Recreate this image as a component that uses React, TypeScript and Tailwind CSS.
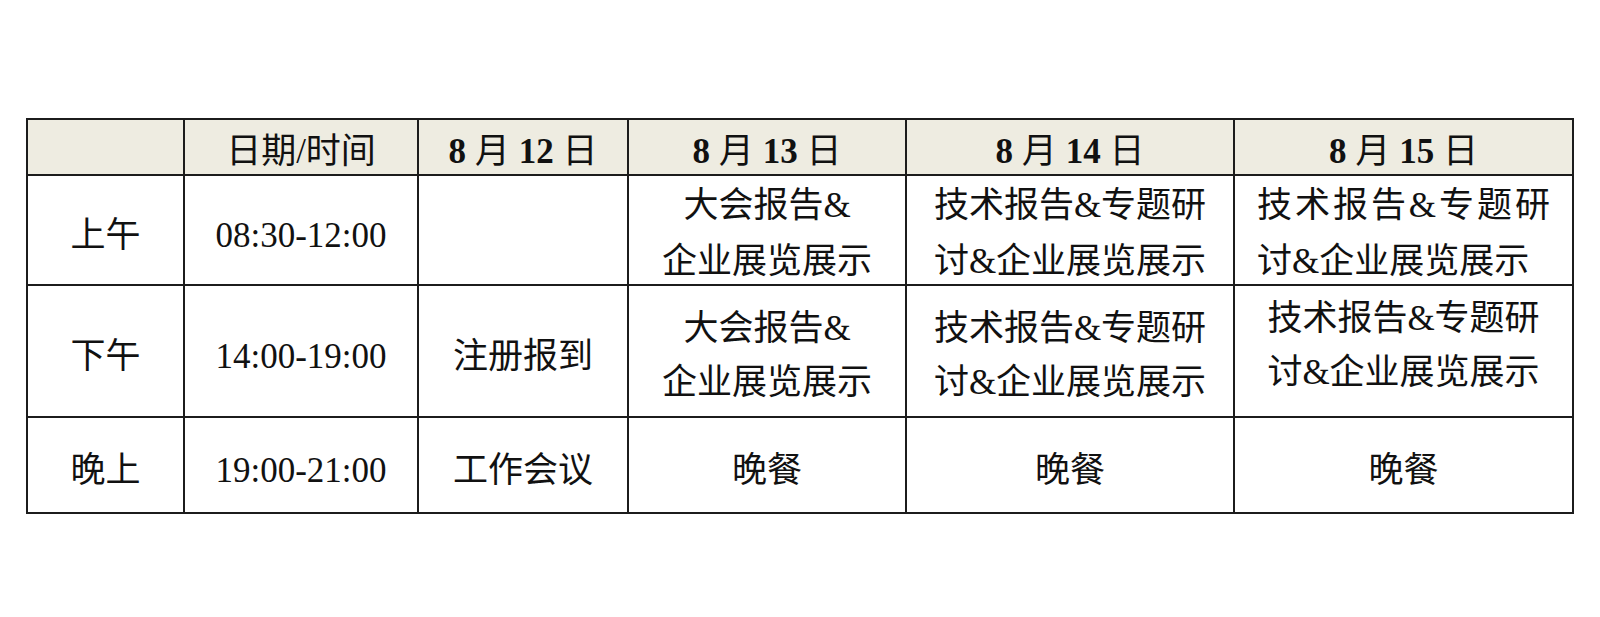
import React from "react";

const font = {
  fontFamily: '"Liberation Serif", "Noto Sans CJK SC", serif',
};

const days = ["12", "13", "14", "15"];

const rows = [
  {
    label: "上午",
    time: "08:30-12:00",
    h: "h-[110px]",
    lead: "leading-[56px] -mt-[2px] -mb-[10px]",
    cells: [
      null,
      ["大会报告&", "企业展览展示"],
      ["技术报告&专题研", "讨&企业展览展示"],
      "justify",
    ],
  },
  {
    label: "下午",
    time: "14:00-19:00",
    h: "h-[132px]",
    lead: "leading-[54px] pt-[10px]",
    cells: [
      ["注册报到"],
      ["大会报告&", "企业展览展示"],
      ["技术报告&专题研", "讨&企业展览展示"],
      "raised",
    ],
  },
  {
    label: "晚上",
    time: "19:00-21:00",
    h: "h-[96px]",
    lead: "",
    cells: [["工作会议"], ["晚餐"], ["晚餐"], ["晚餐"]],
  },
];

const cellBase = "border-2 border-[#1c1c1c] text-center align-middle p-0";

export default function App() {
  return (
    <div className="w-[1600px] h-[617px] bg-white pt-[118px] pl-[26px] text-[#111]" style={font}>
      <table className="table-fixed border-collapse w-[1546px] text-[35px]">
        <colgroup>
          <col className="w-[157px]" />
          <col className="w-[234px]" />
          <col className="w-[210px]" />
          <col className="w-[278px]" />
          <col className="w-[328px]" />
          <col className="w-[339px]" />
        </colgroup>
        <thead>
          <tr className="h-[56px] bg-[#eeece1]">
            <th className={cellBase}></th>
            <th className={`${cellBase} font-normal leading-none pt-[8px]`}>日期/时间</th>
            {days.map((d) => (
              <th key={d} className={`${cellBase} font-normal leading-none pt-[8px]`}>
                <b>8</b> 月 <b>{d}</b> 日
              </th>
            ))}
          </tr>
        </thead>
        <tbody>
          {rows.map((r) => (
            <tr key={r.label} className={r.h}>
              <td className={`${cellBase} leading-none pt-[10px]`}>{r.label}</td>
              <td className={`${cellBase} leading-none pt-[10px]`}>{r.time}</td>
              {r.cells.map((c, i) => {
                if (c === null) return <td key={i} className={cellBase}></td>;
                if (c === "justify")
                  return (
                    <td key={i} className={`${cellBase} px-[22px]`}>
                      <div className={`text-justify ${r.lead}`}>技术报告&专题研讨&企业展览展示</div>
                    </td>
                  );
                if (c === "raised")
                  return (
                    <td key={i} className={cellBase}>
                      <div className="leading-[54px] pb-[10px]">
                        <div>技术报告&专题研</div>
                        <div>讨&企业展览展示</div>
                      </div>
                    </td>
                  );
                if (c.length === 1)
                  return (
                    <td key={i} className={`${cellBase} leading-none pt-[10px]`}>
                      {c[0]}
                    </td>
                  );
                return (
                  <td key={i} className={cellBase}>
                    <div className={r.lead}>
                      {c.map((line, j) => (
                        <div key={j}>{line}</div>
                      ))}
                    </div>
                  </td>
                );
              })}
            </tr>
          ))}
        </tbody>
      </table>
    </div>
  );
}
